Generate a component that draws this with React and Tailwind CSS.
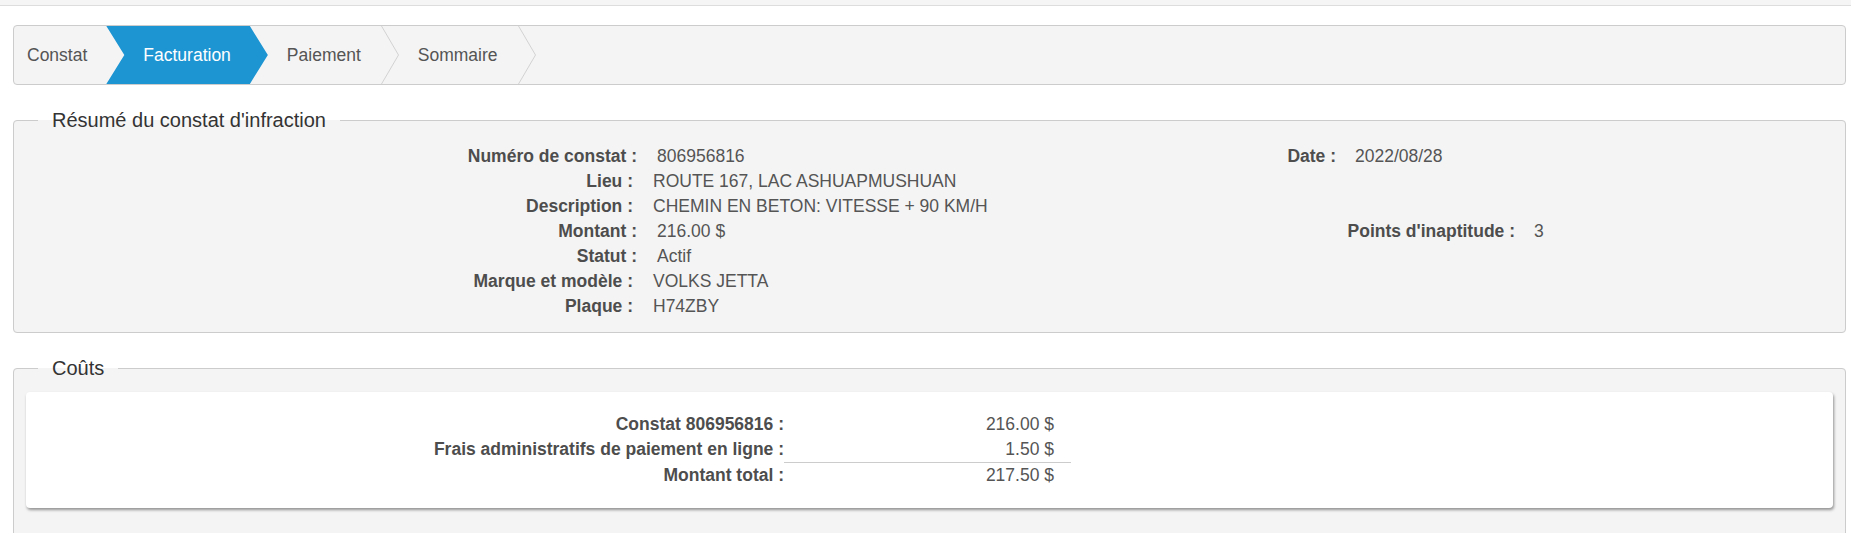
import React from 'react'

// shift: some rows sit 4px further right in the original page
const summaryRows = [
  { label: 'Numéro de constat :', value: '806956816', shift: true, right: { label: 'Date :', value: '2022/08/28', w: 'w-[405px]' } },
  { label: 'Lieu :', value: 'ROUTE 167, LAC ASHUAPMUSHUAN' },
  { label: 'Description :', value: 'CHEMIN EN BETON: VITESSE + 90 KM/H' },
  { label: 'Montant :', value: '216.00 $', shift: true, right: { label: "Points d'inaptitude :", value: '3', w: 'w-[584px]' } },
  { label: 'Statut :', value: 'Actif', shift: true },
  { label: 'Marque et modèle :', value: 'VOLKS JETTA' },
  { label: 'Plaque :', value: 'H74ZBY' },
]

function Separator(){
  return (
    <svg width="18" height="58" viewBox="0 0 18 58" className="shrink-0">
      <polyline points="0.5,0 17.5,29 0.5,58" fill="none" stroke="#d2d2d2" strokeWidth="1" />
    </svg>
  )
}

function Stepper(){
  return (
    <div className="mt-[19px] flex h-[60px] items-stretch rounded-[4px] border border-[#ccc] bg-[#f4f4f4] text-[17.5px] text-[#555]">
      <div className="flex items-center pl-[13px] pr-[19px]">Constat</div>
      <div className="flex items-center bg-[#1e95d3] pl-[37px] pr-[37px] text-white [clip-path:polygon(0_0,calc(100%_-_18px)_0,100%_50%,calc(100%_-_18px)_100%,0_100%,18px_50%)]">
        Facturation
      </div>
      <div className="flex items-center pl-[19px] pr-[20px]">Paiement</div>
      <Separator />
      <div className="flex items-center pl-[19px] pr-[20px]">Sommaire</div>
      <Separator />
    </div>
  )
}

export default function App(){
  return (
    <div className="min-h-screen bg-white font-['Liberation_Sans',Arial,sans-serif] text-[17.5px] text-[#555]">
      <div className="h-[6px] border-b border-[#ddd] bg-[#f5f5f5]" />
      <div className="pl-[13px] pr-[5px]">
        <Stepper />

        {/* résumé */}
        <fieldset className="mt-[24px] rounded-[4px] border border-[#ccc] bg-[#f4f4f4] pt-[12px] pb-[13px]">
          <legend className="ml-[24px] px-[14px] text-[20px] leading-[23px] text-[#333]">Résumé du constat d'infraction</legend>
          {summaryRows.map(r => (
            <div key={r.label} className="flex h-[25px] items-center leading-[25px] whitespace-nowrap">
              <div className={`${r.shift ? 'w-[623px]' : 'w-[619px]'} text-right font-bold text-[#4d4d4d]`}>{r.label}</div>
              <div className={`ml-[20px] ${r.shift ? 'w-[274px]' : 'w-[278px]'}`}>{r.value}</div>
              {r.right && (
                <>
                  <div className={`${r.right.w} text-right font-bold text-[#4d4d4d]`}>{r.right.label}</div>
                  <div className="ml-[19px]">{r.right.value}</div>
                </>
              )}
            </div>
          ))}
        </fieldset>

        {/* coûts */}
        <fieldset className="mt-[24px] rounded-[4px] border border-[#ccc] bg-[#f4f4f4] px-[12px] pt-[12px] pb-[40px]">
          <legend className="ml-[12px] px-[14px] text-[20px] leading-[23px] text-[#333]">Coûts</legend>
          <div className="rounded-[4px] bg-white py-[20px] shadow-[1px_2px_3px_rgba(0,0,0,0.4)]">
            <div className="grid grid-cols-[758px_287px] leading-[25px] whitespace-nowrap">
              <div className="text-right font-bold text-[#4d4d4d]">Constat 806956816 :</div>
              <div className="pr-[17px] text-right">216.00 $</div>
              <div className="text-right font-bold text-[#4d4d4d]">Frais administratifs de paiement en ligne :</div>
              <div className="pr-[17px] text-right">1.50 $</div>
              <div className="border-t border-transparent text-right font-bold text-[#4d4d4d]">Montant total :</div>
              <div className="border-t border-[#ccc] pr-[17px] text-right">217.50 $</div>
            </div>
          </div>
        </fieldset>
      </div>
    </div>
  )
}
